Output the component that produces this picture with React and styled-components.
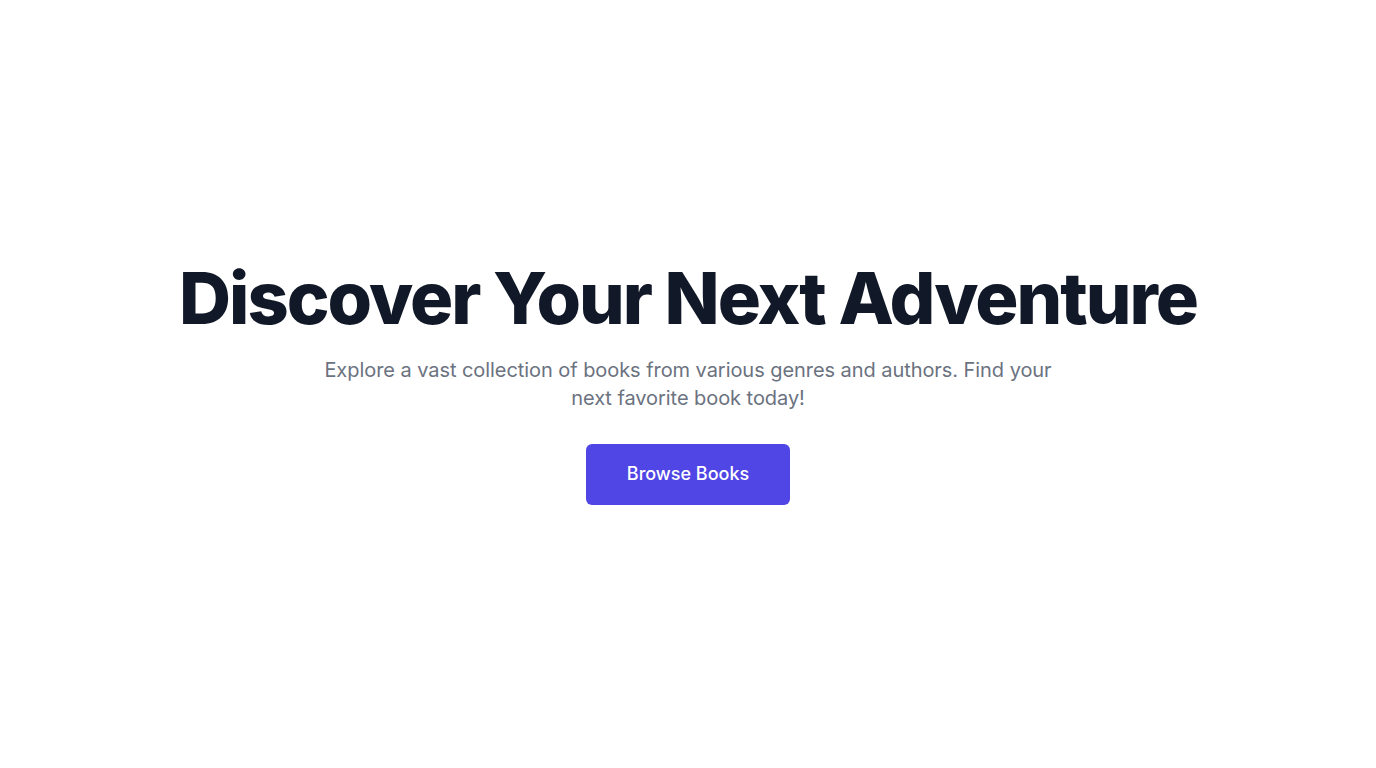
import styled, { createGlobalStyle } from 'styled-components';

const GlobalStyle = createGlobalStyle`
  body {
    margin: 0;
    background: #ffffff;
    font-family: Inter, "Noto Sans", sans-serif;
  }
`;

const Hero = () => {
  return (
    <HeroSection>
      <Title>Discover Your Next Adventure</Title>
      <Lead>
        Explore a vast collection of books from various genres and authors. Find your next
        favorite book today!
      </Lead>
      <PrimaryButton type="button">Browse Books</PrimaryButton>
    </HeroSection>
  );
};

const App = () => {
  return (
    <>
      <GlobalStyle />
      <Hero />
    </>
  );
};

export default App;

const HeroSection = styled.section`
  min-height: 100vh;
  display: flex;
  flex-direction: column;
  align-items: center;
  justify-content: center;
  text-align: center;
  padding: 0 16px 2px;
  box-sizing: border-box;
`;

const Title = styled.h1`
  margin: 0 0 22px;
  font-size: 72px;
  line-height: 1;
  font-weight: 800;
  letter-spacing: -0.028em;
  color: #111827;
`;

const Lead = styled.p`
  margin: 0 0 32px;
  max-width: 768px;
  font-size: 20px;
  line-height: 28px;
  letter-spacing: -0.06px;
  color: #6b7280;
`;

const PrimaryButton = styled.button`
  font-family: inherit;
  font-size: 18px;
  line-height: 28px;
  font-weight: 500;
  color: #ffffff;
  background: #4f46e5;
  border: none;
  border-radius: 6px;
  padding: 16px 41px 17px;
  cursor: pointer;
`;
